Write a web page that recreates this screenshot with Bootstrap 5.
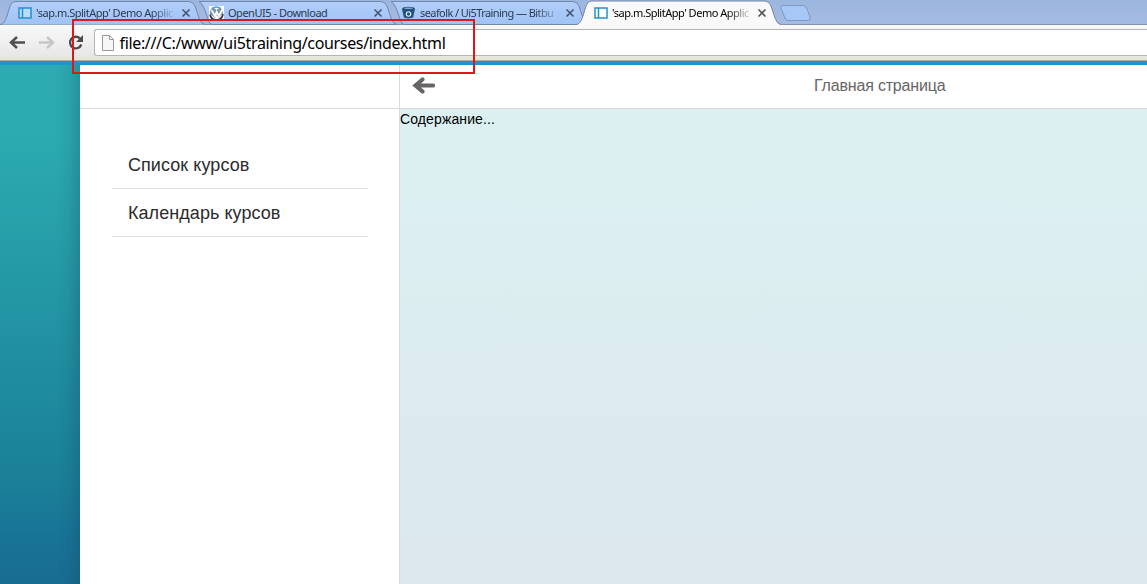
<!DOCTYPE html>
<html lang="ru">
<head>
<meta charset="utf-8">
<title>'sap.m.SplitApp' Demo Application</title>
<link href="https://cdn.jsdelivr.net/npm/bootstrap@5.3.0/dist/css/bootstrap.min.css" rel="stylesheet">
<script src="https://cdn.jsdelivr.net/npm/bootstrap@5.3.0/dist/js/bootstrap.bundle.min.js"></script>
<style>
body{height:584px;width:1147px;font-family:"Liberation Sans",sans-serif;color:#000}
svg{display:block;flex:none}
.tabstrip{height:25px;background:linear-gradient(#9bb7df,#a3b9df 60%,#a3bbe3);border-bottom:1px solid #8593ab}
.browser-tab{width:206px;height:25px;margin-right:-14px;padding:1px 0 0 18px;font:11px/24px "Noto Sans",sans-serif;color:#293a50;flex:none}
.browser-tab.with-logo{padding-left:17px}
.browser-tab.current{z-index:2;color:#000}
.tab-shape{position:absolute;left:0;top:0;z-index:0}
.tab-label{width:137px;white-space:nowrap;-webkit-mask-image:linear-gradient(90deg,#000 115px,transparent 141px)}
.tab-label.whole{-webkit-mask-image:none}
.tab-label span{display:inline-block}
.new-tab{margin-left:11px}
.toolbar{height:36px;background:linear-gradient(#f9f9f9,#e5e5e5);border-bottom:1px solid #a9a9a9;padding:4px 0 4px 8px}
.address{height:27px;border:1px solid #b4b4b4;border-right:0;border-radius:3px 0 0 3px;font:16px/26px "Noto Sans",sans-serif;padding-left:7px}
.url{margin-left:5.5px;letter-spacing:-.34px}
.page-area{height:523px;border-top:4px solid #1799cf;background:linear-gradient(#2dabb1 0,#2baab0 15%,#1a8098 80%,#187397 92%,#176d91)}
.side{width:80px;background:linear-gradient(90deg,transparent 56px,rgba(20,60,90,.07) 68px,rgba(20,60,90,.24))}
.master{width:320px;border-right:1px solid #d9dcdd}
.bar{height:44px;border-bottom:1px solid #d9d9d9}
.course-nav{width:256px;padding-top:32px}
.course{height:48px;border-bottom:1px solid #e1e1e1;font-size:18px;line-height:49px;color:#2b2b2b;padding-left:16.5px;letter-spacing:.06px}
.detail{background:linear-gradient(#dcf1f2,#dce8ee)}
.detail .bar{color:#666;font-size:16px;line-height:41px;padding-left:12px}
.page-title{margin-left:379px;letter-spacing:-.18px}
.content-text{font-size:14px;line-height:20px;letter-spacing:.12px}
.marker{left:72px;top:19px;width:403px;height:55px;border:2px solid #d81a20;z-index:5}
</style>
</head>
<body class="overflow-hidden position-relative d-flex flex-column m-0">
<header>
<div class="tabstrip d-flex">
 <div class="browser-tab position-relative d-flex align-items-center">
  <svg class="tab-shape" width="206" height="25"><defs><linearGradient id="tabfill" x2="0" y2="1"><stop stop-color="#b3cef8"/><stop offset="1" stop-color="#9fc3f6"/></linearGradient></defs><path d="M0 24.5C4 24 5 21 7 16L10 6Q12 1.500 15 1.500H189Q193 1.500 195 6L199 18Q201 24 205 24.500" fill="url(#tabfill)" stroke="#7188ad"/></svg>
  <svg class="position-relative" width="14" height="12"><path d="M1 1h12v10H1zM4.500 1v10" fill="#bfd9f8" stroke="#2092cf" stroke-width="1.500"/></svg>
  <div class="tab-label position-relative ms-1"><span style="letter-spacing:-.48px">'sap.m.SplitApp' Demo Applic</span></div>
  <svg class="position-relative ms-2" width="10" height="10"><path d="m1.500 1.500 7 7m0-7-7 7" stroke="#45566f" stroke-width="1.600"/></svg>
 </div>
 <div class="browser-tab with-logo position-relative d-flex align-items-center">
  <svg class="tab-shape" width="206" height="25"><path d="M7 1.500Q10 3 12 8L16 19Q17 24.500 20 24.500H205Q201 24 199 18L195 6Q193 1.500 189 1.500Z" fill="url(#tabfill)" stroke="#7188ad"/></svg>
  <svg class="position-relative" width="15" height="15" viewBox="0 0 15 15"><path fill="#fff" d="M0 0h15v15H0z"/><path d="M4 1.500Q0 4 1 8l5 4 1.500-3L10 12l4-5q0-3-3-5.500L7.500 4z" fill="#7792a8"/><path d="m2.500 4 3.500 6 1.700-4L10 10l3-6" fill="none" stroke="#f7f9fa" stroke-width="2"/><path d="M1 8.500q1 5.500 6.500 5.500T14 8" fill="none" stroke="#35393d" stroke-width="1.700"/><path d="M3 2.500q4-3 9 0" stroke="#4c9acb" fill="none" stroke-width="1.300"/></svg>
  <div class="tab-label whole position-relative ms-1"><span style="letter-spacing:-.48px">OpenUI5 - Download</span></div>
  <svg class="position-relative ms-2" width="10" height="10"><path d="m1.500 1.500 7 7m0-7-7 7" stroke="#45566f" stroke-width="1.600"/></svg>
 </div>
 <div class="browser-tab with-logo position-relative d-flex align-items-center">
  <svg class="tab-shape" width="206" height="25"><path d="M7 1.500Q10 3 12 8L16 19Q17 24.500 20 24.500H205Q201 24 199 18L195 6Q193 1.500 189 1.500Z" fill="url(#tabfill)" stroke="#7188ad"/></svg>
  <svg class="position-relative" width="15" height="15" viewBox="0 0 15 15"><path d="M1 3 3 12q4 4 9 0l2-9z" fill="#24527c"/><ellipse cx="7.500" cy="2.700" rx="6.500" ry="2" fill="#24527c"/><ellipse cx="7.500" cy="2.300" rx="4.500" ry=".8" fill="#86a9c9"/><circle cx="7.500" cy="8" r="2.200" fill="#24527c" stroke="#e2efff" stroke-width="1.100"/><path d="M3 12q4 2 9 0" fill="none" stroke="#a9c8e8"/></svg>
  <div class="tab-label position-relative ms-1"><span style="letter-spacing:-.58px">seafolk / Ui5Training — Bitbu</span></div>
  <svg class="position-relative ms-2" width="10" height="10"><path d="m1.500 1.500 7 7m0-7-7 7" stroke="#45566f" stroke-width="1.600"/></svg>
 </div>
 <div class="browser-tab current position-relative d-flex align-items-center">
  <svg class="tab-shape" width="206" height="25"><path d="M0 25C4 24 5 21 7 16L10 6Q12 1 15 1H189Q193 1 195 6L199 18Q201 24 205 25" fill="#f9f9f9"/><path d="M0 24.500C4 24 5 21 7 16L10 6Q12 1 15 1H189Q193 1 195 6L199 18Q201 24 205 24.500" fill="none" stroke="#7589a8"/></svg>
  <svg class="position-relative" width="14" height="12"><path d="M1 1h12v10H1zM4.500 1v10" fill="#fff" stroke="#2092cf" stroke-width="1.500"/></svg>
  <div class="tab-label position-relative ms-1"><span style="letter-spacing:-.48px">'sap.m.SplitApp' Demo Applic</span></div>
  <svg class="position-relative ms-2" width="10" height="10"><path d="m1.500 1.500 7 7m0-7-7 7" stroke="#555" stroke-width="1.600"/></svg>
 </div>
 <svg class="new-tab" width="36" height="24"><path d="M4 5.500H24Q27 5.500 28 9L31 17Q32 20.500 29 20.500H9Q6.500 20.500 5.500 17L2 8Q1 5.500 4 5.500Z" fill="#a7c7f6" stroke="#7c99c6"/></svg>
</div>
<div class="toolbar d-flex">
 <svg width="86" height="27" viewBox="8 29 86 27" fill="none"><path d="M25 42.500H11m6-5.500-6 5.500 6 5.500" stroke="#505050" stroke-width="2.500"/><path d="M39 42.500h14M47 37l6 5.500-6 5.500" stroke="#c6c6c6" stroke-width="2.500"/><path d="M80 38.500a5.800 5.800 0 1 0 1.300 6" stroke="#4b4b4b" stroke-width="2.300"/><path d="M83 35v7h-7z" fill="#4b4b4b"/></svg>
 <div class="address flex-grow-1 d-flex align-items-center bg-white">
  <svg width="12" height="16"><path d="M.5.5h7l4 4v11H.5zM7.500.5v4h4" fill="#f7f7f7" stroke="#999"/></svg>
  <span class="url">file:///C:/www/ui5training/courses/index.html</span>
 </div>
</div>
</header>
<main class="page-area d-flex">
 <div class="side flex-shrink-0"></div>
 <aside class="master bg-white flex-shrink-0">
  <div class="bar"></div>
  <nav class="course-nav d-flex flex-column mx-auto"><div class="course">Список курсов</div><div class="course">Календарь курсов</div></nav>
 </aside>
 <section class="detail flex-grow-1">
  <div class="bar bg-white d-flex"><svg width="23" height="41"><path d="M21 20.500H4m6.500-6L3.500 20.500l7 6" fill="none" stroke="#666" stroke-width="4.200" stroke-linecap="round"/></svg><div class="page-title">Главная страница</div></div>
  <div class="content-text">Содержание...</div>
 </section>
</main>
<div class="marker position-absolute"></div>
</body>
</html>
